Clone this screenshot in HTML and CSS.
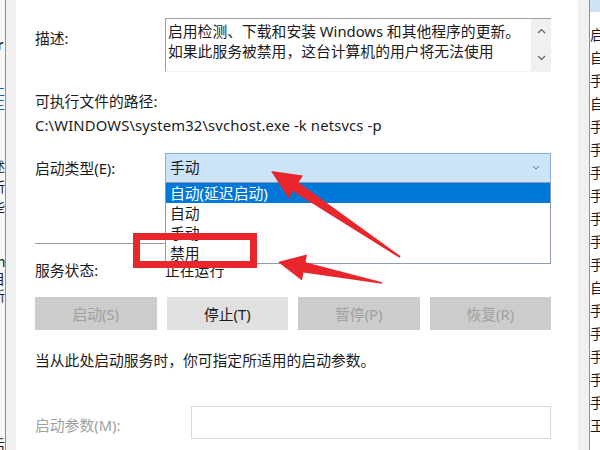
FILE: index.html
```html
<!DOCTYPE html>
<html lang="zh-CN">
<head>
    <meta charset="UTF-8">
    <title>Windows Update 的属性</title>
    <link rel="stylesheet" href="styles.css">
</head>
<body>
    <div class="screen">
        <div class="side-left">
            <div class="peek-left">
                <span class="bold">r</span>
                <span class="blue">止</span>
                <span class="blue">主</span>
                <span>述</span>
                <span>所</span>
                <span>些</span>
                <span>n</span>
                <span>目</span>
                <span>新</span>
                <span class="last">后</span>
            </div>
        </div>
        <div class="gutter"></div>

        <div class="dialog">
            <div class="row row-desc">
                <div class="label label-desc">描述:</div>
                <div class="desc-box">
                    <div class="desc-text">
                        <div>启用检测、下载和安装 Windows 和其他程序的更新。</div>
                        <div>如果此服务被禁用，这台计算机的用户将无法使用</div>
                    </div>
                    <div class="scrollbar">
                        <svg width="9" height="6" viewBox="0 0 9 6"><path d="M1 5 L4.5 1.5 L8 5" fill="none" stroke="#606060" stroke-width="1.2"/></svg>
                        <svg width="9" height="6" viewBox="0 0 9 6"><path d="M1 1 L4.5 4.5 L8 1" fill="none" stroke="#606060" stroke-width="1.2"/></svg>
                    </div>
                </div>
            </div>

            <div class="path">
                <div>可执行文件的路径:</div>
                <div class="path-value">C:\WINDOWS\system32\svchost.exe -k netsvcs -p</div>
            </div>

            <div class="row row-type">
                <div class="label">启动类型(E):</div>
                <div class="combo">
                    <span>手动</span>
                    <svg width="8" height="5" viewBox="0 0 8 5"><path d="M1 1 L4 4 L7 1" fill="none" stroke="#707070" stroke-width="1"/></svg>
                    <ul class="dropdown">
                        <li class="selected">自动(延迟启动)</li>
                        <li>自动</li>
                        <li>手动</li>
                        <li>禁用</li>
                    </ul>
                </div>
            </div>

            <div class="separator"></div>

            <div class="row row-status">
                <div class="label">服务状态:</div>
                <div>正在运行</div>
            </div>

            <div class="buttons">
                <button class="btn" disabled>启动(S)</button>
                <button class="btn btn-active">停止(T)</button>
                <button class="btn" disabled>暂停(P)</button>
                <button class="btn" disabled>恢复(R)</button>
            </div>

            <p class="hint">当从此处启动服务时，你可指定所适用的启动参数。</p>

            <div class="row row-params">
                <div class="label label-muted">启动参数(M):</div>
                <div class="param-input"></div>
            </div>
        </div>

        <div class="gutter gutter-right"></div>
        <div class="side-right">
            <div class="list-head"></div>
            <div class="peek-right">
                <span>启</span><span>自</span><span>手</span><span>自</span><span>手</span>
                <span>手</span><span>手</span><span>手</span><span>手</span><span>手</span>
                <span>手</span><span>自</span><span>手</span><span>手</span><span>手</span>
                <span>手</span><span>手</span><span>王</span>
            </div>
        </div>

        <!-- annotation marks drawn over the screenshot -->
        <div class="mark-box"></div>
        <svg class="arrows" width="600" height="450" viewBox="0 0 600 450">
            <polygon points="271,171 303,175.5 298.5,182.5 400.6,256.2 399.4,257.8 292.5,191 289,199" fill="#e8262b"/>
            <polygon points="278,262 307,254.5 305.5,262.3 382.2,282.2 381.8,283.8 303.5,272.5 302,280.5" fill="#e8262b"/>
        </svg>
    </div>
</body>
</html>
```

FILE: styles.css
```css
* {
    margin: 0;
    padding: 0;
    box-sizing: border-box;
}

html,
body {
    width: 600px;
    height: 450px;
    overflow: hidden;
    background: #fff;
}

body {
    font-family: "Noto Sans", "Noto Sans CJK SC", sans-serif;
    font-size: 14.8px;
    color: #1b1b1b;
}

.screen {
    display: flex;
    height: 450px;
    position: relative;
}

/* background window, left edge */
.side-left {
    width: 6px;
    background: #f7f7f7;
    border-right: 1px solid #5f9bd6;
    overflow: hidden;
}

.peek-left {
    display: flex;
    flex-direction: column;
    margin-left: -9px;
    padding-top: 34px;
    font-family: "Noto Sans CJK SC", sans-serif;
    font-size: 14px;
    line-height: 20px;
}

.peek-left .bold {
    font-weight: 700;
    margin-left: 6px;
    margin-bottom: 28px;
}

.peek-left .blue {
    color: #1a5fb4;
    line-height: 14px;
}

.peek-left .blue + span:not(.blue) {
    margin-top: 46px;
}

.peek-left span:nth-child(7) {
    margin-top: 36px;
    margin-left: 6px;
    line-height: 18px;
}

.peek-left span:nth-child(8),
.peek-left span:nth-child(9) {
    line-height: 17px;
}

.peek-left .last {
    margin-top: 130px;
}

.gutter {
    width: 10px;
    background: #f0f0f0;
}

.gutter-right {
    width: 12px;
    border-right: 1px solid #5f9bd6;
}

/* background window, right edge */
.side-right {
    flex: 1;
    overflow: hidden;
}

.list-head {
    height: 12px;
    background: #cfe2f5;
}

.peek-right {
    display: flex;
    flex-direction: column;
    padding-top: 11px;
    font-family: "Noto Sans CJK SC", sans-serif;
    font-size: 14px;
    line-height: 23px;
    white-space: nowrap;
}

/* the properties dialog */
.dialog {
    width: 562px;
    padding: 18px 27px 0 19px;
    background: #fff;
}

.row {
    display: grid;
    grid-template-columns: 130px 1fr;
    line-height: 20px;
}

.row-desc {
    height: 54px;
}

.label-desc {
    padding-top: 10px;
}

.desc-box {
    display: flex;
    border-top: 1px solid #a0a0a0;
    border-left: 1px solid #a0a0a0;
    border-bottom: 1px solid #f2f2f2;
}

.desc-text {
    flex: 1;
    padding: 2px 0 0 2px;
    line-height: 20px;
    white-space: nowrap;
}

.scrollbar {
    width: 20px;
    background: #f0f0f0;
    display: flex;
    flex-direction: column;
    justify-content: space-between;
    align-items: center;
    padding: 9px 0 10px;
}

.path {
    margin-top: 17px;
    line-height: 24px;
}

.path-value {
    letter-spacing: 0.15px;
}

.row-type {
    margin-top: 16px;
    align-items: center;
}

.combo {
    position: relative;
    height: 30px;
    background: #cce4f7;
    border: 1px solid #86aed6;
    display: flex;
    align-items: center;
    justify-content: space-between;
    padding: 0 10px 2px 4px;
}

.dropdown {
    position: absolute;
    top: 28px;
    left: -1px;
    right: -1px;
    list-style: none;
    background: #fff;
    border: 1px solid #8c9cae;
    z-index: 2;
}

.dropdown li {
    height: 20px;
    line-height: 20px;
    padding-left: 4px;
}

.dropdown .selected {
    background: #0078d7;
    color: #fff;
}

.separator {
    margin-top: 60px;
    height: 1px;
    background: #a0a0a0;
}

.row-status {
    margin-top: 16px;
}

.buttons {
    margin-top: 17px;
    display: grid;
    grid-template-columns: repeat(4, 1fr);
    gap: 10px;
}

.btn {
    height: 33px;
    border: 1px solid #cccccc;
    background: #cccccc;
    color: #a0a0a0;
    font-family: inherit;
    font-size: 14.8px;
}

.btn-active {
    background: #e1e1e1;
    border-color: #e1e1e1;
    color: #1b1b1b;
}

.hint {
    margin-top: 20px;
    line-height: 20px;
}

.row-params {
    margin-top: 36px;
    grid-template-columns: 156px 1fr;
    align-items: center;
}

.label-muted {
    color: #a0a0a0;
    padding-top: 4px;
}

.param-input {
    height: 33px;
    border: 1px solid #d9d9d9;
}

/* red annotation */
.mark-box {
    position: absolute;
    left: 133px;
    top: 233px;
    width: 124px;
    height: 35px;
    border: 7px solid #e8262b;
    z-index: 3;
}

.arrows {
    position: absolute;
    left: 0;
    top: 0;
    z-index: 3;
    pointer-events: none;
}
```
